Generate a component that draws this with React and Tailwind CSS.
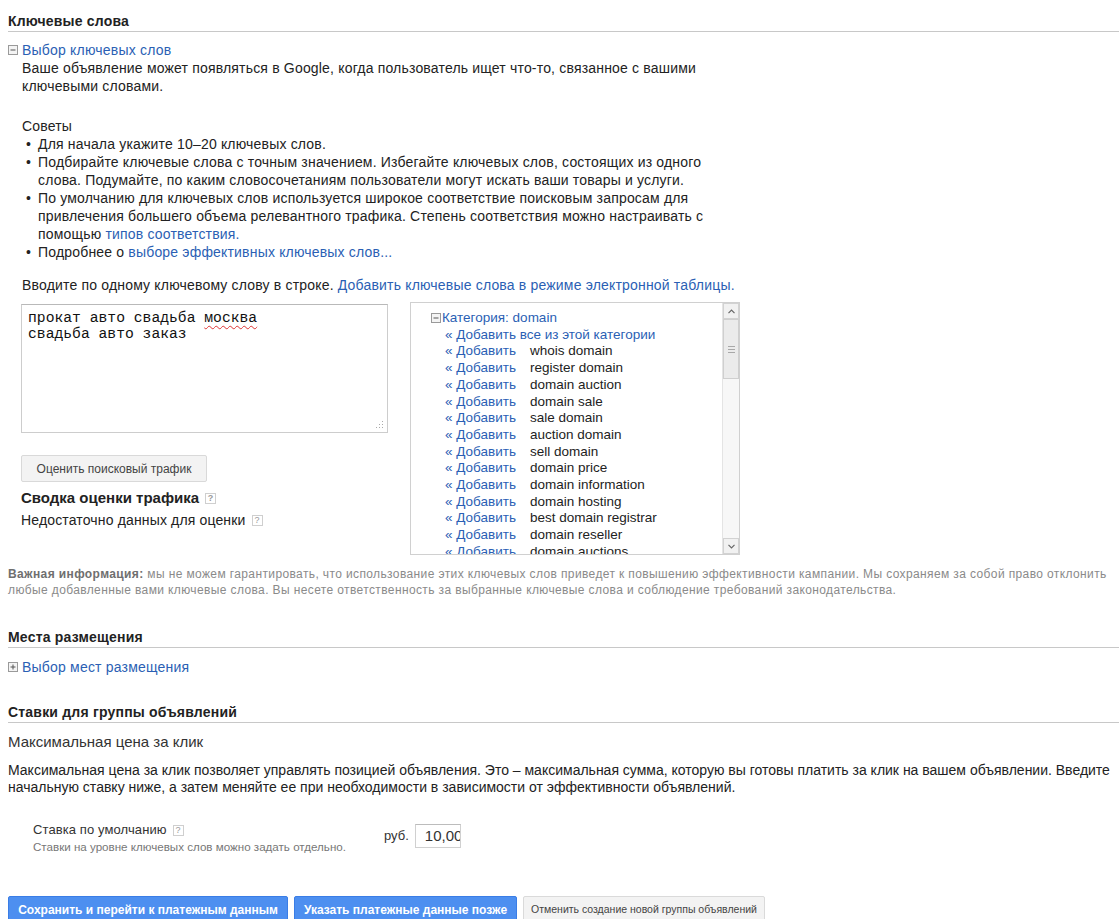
import React from 'react';

const keywords = [
  'whois domain',
  'register domain',
  'domain auction',
  'domain sale',
  'sale domain',
  'auction domain',
  'sell domain',
  'domain price',
  'domain information',
  'domain hosting',
  'best domain registrar',
  'domain reseller',
  'domain auctions',
  'domain names',
];

function ToggleBox({ open }) {
  return (
    <span className="inline-flex items-center justify-center w-[10px] h-[10px] border border-[#9a9a9a] bg-[#f4f4f4] shrink-0">
      <svg width="8" height="8" viewBox="0 0 8 8">
        <path d="M1.5 4h5" stroke="#555" strokeWidth="1" />
        {!open && <path d="M4 1.5v5" stroke="#555" strokeWidth="1" />}
      </svg>
    </span>
  );
}

function Help() {
  return (
    <span className="inline-flex items-center justify-center w-[11px] h-[11px] border border-[#cfcfcf] text-[9px] leading-none text-[#9a9a9a] ml-[6px] align-middle">
      ?
    </span>
  );
}

function SectionTitle({ children, className = '' }) {
  return (
    <div className={`border-b border-[#c8c8c8] pb-[2px] text-[14px] leading-4 tracking-[0.2px] font-bold text-[#222] ${className}`}>
      {children}
    </div>
  );
}

function Arrow({ up }) {
  return (
    <div className="h-[16px] flex items-center justify-center bg-[#f1f1f1] border border-[#d2d2d2]">
      <svg width="7" height="5" viewBox="0 0 7 5">
        <path d={up ? 'M0.5 4.2L3.5 1.2L6.5 4.2' : 'M0.5 0.8L3.5 3.8L6.5 0.8'} fill="none" stroke="#666" strokeWidth="1.2" />
      </svg>
    </div>
  );
}

function KeywordList() {
  return (
    <div className="flex w-[330px] h-[253px] border border-[#d0d0d0] bg-white">
      <div className="flex-1 overflow-hidden pt-[7px] pl-[20px] text-[13.5px] leading-[16.7px]">
        <div className="flex items-center gap-[1px]">
          <ToggleBox open />
          <span className="text-[#2b5fb4]">Категория: domain</span>
        </div>
        <div className="pl-[14px] text-[#2b5fb4]">« Добавить все из этой категории</div>
        {keywords.map((k) => (
          <div key={k} className="flex pl-[14px]">
            <span className="w-[85px] shrink-0 text-[#2b5fb4]">« Добавить</span>
            <span className="text-[#222]">{k}</span>
          </div>
        ))}
      </div>
      <div className="w-[17px] flex flex-col bg-[#f7f7f7] border-l border-[#e4e4e4]">
        <Arrow up />
        <div className="h-[60px] flex flex-col items-center justify-center gap-[2px] bg-[#ebebeb] border border-[#cfcfcf]">
          <div className="w-[7px] h-px bg-[#a8a8a8]" />
          <div className="w-[7px] h-px bg-[#a8a8a8]" />
          <div className="w-[7px] h-px bg-[#a8a8a8]" />
        </div>
        <div className="flex-1" />
        <Arrow />
      </div>
    </div>
  );
}

const bullet = "relative whitespace-nowrap before:content-['•'] before:absolute before:-left-[12px]";

export default function App() {
  return (
    <div className="min-h-screen bg-white pl-2 pt-[13px] font-['Liberation_Sans',Arial,sans-serif] text-[#222] overflow-hidden">
      {/* Ключевые слова */}
      <SectionTitle>Ключевые слова</SectionTitle>

      <div className="mt-[9px] flex items-center gap-[4px] text-[14px] tracking-[0.2px] leading-[18px]">
        <ToggleBox open />
        <span className="text-[#2b5fb4]">Выбор ключевых слов</span>
      </div>

      <div className="pl-[14px] text-[14px] tracking-[0.18px] leading-[18px]">
        <p className="whitespace-nowrap">
          Ваше объявление может появляться в Google, когда пользователь ищет что-то, связанное с вашими
          <br />
          ключевыми словами.
        </p>

        <p className="mt-[22px]">Советы</p>
        <ul className="pl-[16px]">
          <li className={bullet}>Для начала укажите 10–20 ключевых слов.</li>
          <li className={bullet}>
            Подбирайте ключевые слова с точным значением. Избегайте ключевых слов, состоящих из одного
            <br />
            слова. Подумайте, по каким словосочетаниям пользователи могут искать ваши товары и услуги.
          </li>
          <li className={bullet}>
            По умолчанию для ключевых слов используется широкое соответствие поисковым запросам для
            <br />
            привлечения большего объема релевантного трафика. Степень соответствия можно настраивать с
            <br />
            помощью <span className="text-[#2b5fb4]">типов соответствия.</span>
          </li>
          <li className={bullet}>
            Подробнее о <span className="text-[#2b5fb4]">выборе эффективных ключевых слов...</span>
          </li>
        </ul>

        <p className="mt-[15px] whitespace-nowrap">
          Вводите по одному ключевому слову в строке.{' '}
          <span className="text-[#2b5fb4]">Добавить ключевые слова в режиме электронной таблицы.</span>
        </p>
      </div>

      <div className="flex items-start pl-[13px] mt-[8px]">
        <div className="w-[389px] pt-[2px]">
          <div className="relative w-[367px] h-[129px] border border-[#cdcdcd] border-t-[#b9b9b9] px-[6px] py-[5px] font-['Liberation_Mono','Courier_New',monospace] text-[14.7px] leading-[16px] text-[#111]">
            <div>
              прокат авто свадьба{' '}
              <span className="underline decoration-wavy decoration-[#d33] decoration-1 underline-offset-[3px]">москва</span>
            </div>
            <div>свадьба авто заказ</div>
            <svg className="absolute right-[3px] bottom-[3px]" width="9" height="9" viewBox="0 0 9 9">
              <rect x="7" y="1" width="1" height="1" fill="#aaa" />
              <rect x="4" y="4" width="1" height="1" fill="#aaa" />
              <rect x="7" y="4" width="1" height="1" fill="#aaa" />
              <rect x="1" y="7" width="1" height="1" fill="#aaa" />
              <rect x="4" y="7" width="1" height="1" fill="#aaa" />
              <rect x="7" y="7" width="1" height="1" fill="#aaa" />
            </svg>
          </div>

          <button className="mt-[22px] w-[186px] h-[27px] bg-[#f3f3f3] border border-[#d9d9d9] rounded-[2px] text-[12px] text-[#444]">
            Оценить поисковый трафик
          </button>

          <div className="mt-[7px] flex items-center text-[15px] leading-[18px] font-bold text-[#222]">
            Сводка оценки трафика <Help />
          </div>
          <div className="mt-[4px] flex items-center text-[14px] tracking-[0.15px] leading-[18px] text-[#222]">
            Недостаточно данных для оценки <Help />
          </div>
        </div>

        <KeywordList />
      </div>

      <p className="mt-[11px] whitespace-nowrap text-[12px] tracking-[0.38px] leading-[16px] text-[#8a8a8a]">
        <span className="font-bold text-[#6f6f6f]">Важная информация:</span> мы не можем гарантировать, что использование этих ключевых слов приведет к повышению эффективности кампании. Мы сохраняем за собой право отклонить
        <br />
        любые добавленные вами ключевые слова. Вы несете ответственность за выбранные ключевые слова и соблюдение требований законодательства.
      </p>

      {/* Места размещения */}
      <SectionTitle className="mt-[31px]">Места размещения</SectionTitle>

      <div className="mt-[10px] flex items-center gap-[4px] text-[14px] tracking-[0.2px] leading-[18px]">
        <ToggleBox />
        <span className="text-[#2b5fb4]">Выбор мест размещения</span>
      </div>

      {/* Ставки */}
      <SectionTitle className="mt-[28px]">Ставки для группы объявлений</SectionTitle>

      <div className="mt-[10px] text-[15px] leading-[18px] text-[#333]">Максимальная цена за клик</div>

      <p className="mt-[11px] whitespace-nowrap text-[14px] leading-[17px]">
        Максимальная цена за клик позволяет управлять позицией объявления. Это – максимальная сумма, которую вы готовы платить за клик на вашем объявлении. Введите
        <br />
        начальную ставку ниже, а затем меняйте ее при необходимости в зависимости от эффективности объявлений.
      </p>

      <div className="mt-[25px] pl-[25px] flex items-start">
        <div className="w-[351px]">
          <div className="flex items-center text-[13px] tracking-[0.1px] leading-[18px] text-[#333]">
            Ставка по умолчанию <Help />
          </div>
          <div className="text-[11.6px] leading-[15px] text-[#777]">Ставки на уровне ключевых слов можно задать отдельно.</div>
        </div>
        <span className="mt-[6px] text-[13px] leading-[18px] text-[#333]">руб.</span>
        <div className="ml-[6px] mt-[3px] w-[46px] h-[24px] border border-[#d0d0d0] border-t-[#bcbcbc] pl-[9px] overflow-hidden text-[15px] leading-[22px] text-[#333] whitespace-nowrap">
          10,00
        </div>
      </div>

      <div className="mt-[42px] flex gap-[6px]">
        <button className="w-[280px] h-[28px] bg-[#4d8ff0] border border-[#3a7de6] rounded-[2px] text-[12px] font-bold text-white">
          Сохранить и перейти к платежным данным
        </button>
        <button className="w-[223px] h-[28px] bg-[#4d8ff0] border border-[#3a7de6] rounded-[2px] text-[12px] font-bold text-white">
          Указать платежные данные позже
        </button>
        <button className="w-[242px] h-[28px] bg-[#f3f3f3] border border-[#dadada] rounded-[2px] text-[10.5px] text-[#444]">
          Отменить создание новой группы объявлений
        </button>
      </div>
    </div>
  );
}
